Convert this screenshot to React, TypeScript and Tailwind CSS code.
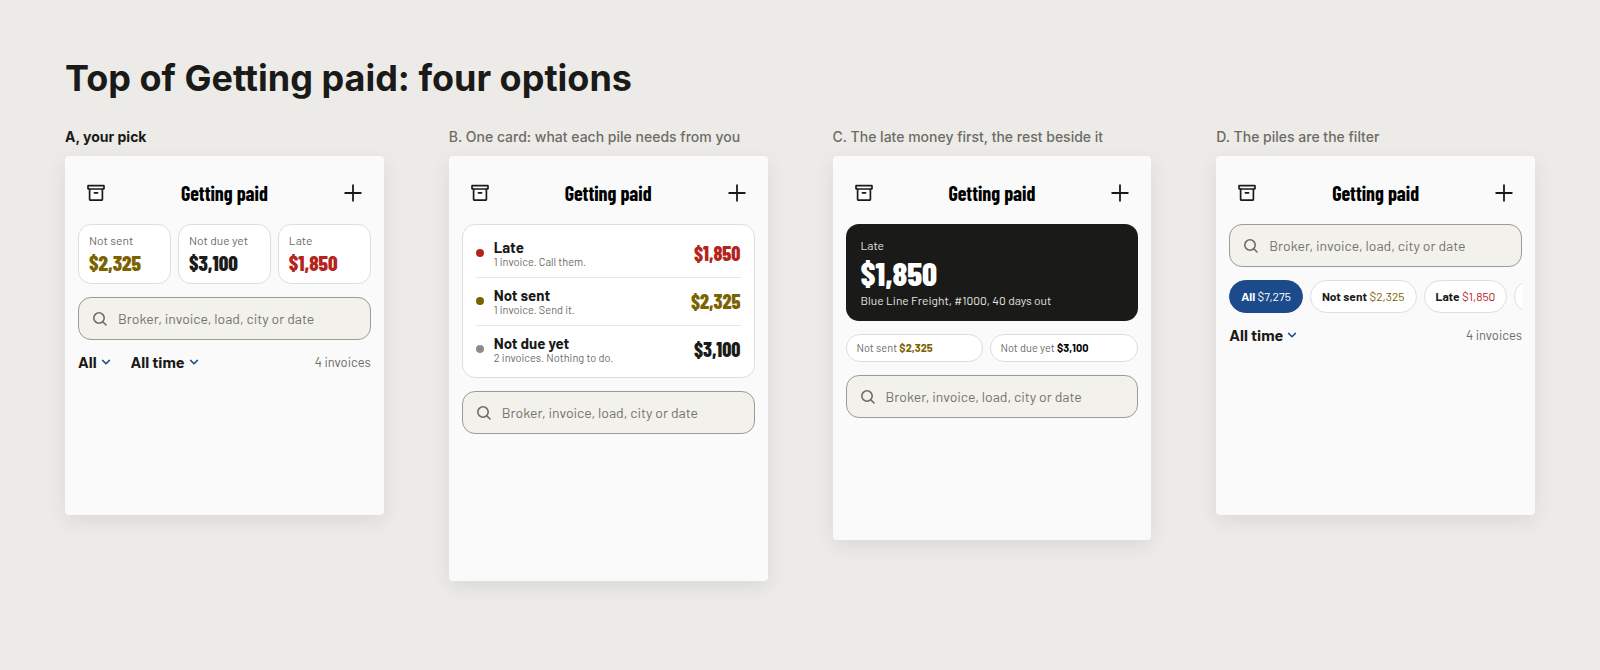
import React, { useId } from "react";

const money = "font-['Barlow_Condensed','Liberation_Sans_Narrow',sans-serif] font-extrabold";

function ArchiveIcon() {
  return (
    <svg width="20" height="20" viewBox="0 0 20 20" fill="none" stroke="currentColor" strokeWidth="1.7" strokeLinejoin="round" strokeLinecap="round" aria-hidden="true">
      <rect x="2" y="2.6" width="16" height="3.4" rx="0.5" />
      <path d="M3.6 6V16.2a1 1 0 0 0 1 1h10.8a1 1 0 0 0 1-1V6M8.4 9.8h3.2" />
    </svg>
  );
}

function PlusIcon() {
  return (
    <svg width="20" height="20" viewBox="0 0 20 20" fill="none" stroke="currentColor" strokeWidth="1.8" strokeLinecap="round" aria-hidden="true">
      <path d="M10 2.2v15.6M2.2 10h15.6" />
    </svg>
  );
}

function SearchIcon() {
  return (
    <svg width="16" height="16" viewBox="0 0 16 16" fill="none" stroke="currentColor" strokeWidth="1.6" strokeLinecap="round" aria-hidden="true">
      <circle cx="7" cy="7" r="5.2" />
      <path d="M10.8 10.8l3.2 3.2" />
    </svg>
  );
}

function ChevronIcon() {
  return (
    <svg className="pointer-events-none -ml-4 shrink-0 text-[#1c4b8c]" width="10" height="10" viewBox="0 0 10 10" fill="none" stroke="currentColor" strokeWidth="1.5" strokeLinecap="round" strokeLinejoin="round" aria-hidden="true">
      <path d="M1.6 3.4L5 6.7l3.4-3.3" />
    </svg>
  );
}

function Option({ label, active, height, children }: { label: string; active?: boolean; height: string; children: React.ReactNode }) {
  return (
    <section className="min-w-0">
      <h2 className={`mb-[9px] truncate text-sm leading-5 ${active ? "font-bold text-[#1a1a18]" : "font-medium text-[#6c6c66]"}`}>{label}</h2>
      <div className={`flex flex-col rounded bg-[#fafafa] px-[13px] pt-[17px] font-[Barlow,Roboto,sans-serif] text-[#1a1a18] shadow-[0_6px_20px_rgba(0,0,0,0.08)] ${height}`}>
        <header className="mb-[11px] flex h-10 items-center justify-between">
          <button type="button" aria-label="Archive" className="flex size-9 items-center justify-center">
            <ArchiveIcon />
          </button>
          <h3 className="font-['Barlow_Condensed','Liberation_Sans_Narrow',sans-serif] text-xl leading-6 font-bold text-black">Getting paid</h3>
          <button type="button" aria-label="Add invoice" className="flex size-9 items-center justify-center">
            <PlusIcon />
          </button>
        </header>
        <div className="flex flex-col gap-[13px]">{children}</div>
      </div>
    </section>
  );
}

function Search() {
  const id = useId();
  return (
    <div className="flex h-[43px] items-center gap-[10px] rounded-[13px] border border-[#9b9b92] bg-[#f2f1eb] px-[13px] text-[#6c6c66]">
      <label htmlFor={id} aria-label="Search invoices">
        <SearchIcon />
      </label>
      <input id={id} type="search" placeholder="Broker, invoice, load, city or date" className="min-w-0 flex-1 bg-transparent text-sm outline-none placeholder:text-[#74746e]" />
    </div>
  );
}

function Picker({ label, value }: { label: string; value: string }) {
  return (
    <label className="flex items-center">
      <select aria-label={label} className="field-sizing-content appearance-none bg-transparent pr-5 text-base leading-[18px] font-bold outline-none">
        <option>{value}</option>
      </select>
      <ChevronIcon />
    </label>
  );
}

function Filters({ all }: { all?: boolean }) {
  return (
    <div className="flex items-center gap-5">
      {all && <Picker label="Status" value="All" />}
      <Picker label="Period" value="All time" />
      <span className="ml-auto text-[13px] leading-[18px] text-[#6c6c66]">4 invoices</span>
    </div>
  );
}

function Stat({ label, value, color }: { label: string; value: string; color: string }) {
  return (
    <div className="rounded-[13px] border border-[#dededa] bg-white px-[10px] pt-[7px] pb-[6px]">
      <dt className="text-xs leading-[17px] text-[#6c6c66]">{label}</dt>
      <dd className={`${money} text-[21px] leading-7 ${color}`}>{value}</dd>
    </div>
  );
}

function Pile({ dot, label, note, value, color }: { dot: string; label: string; note: string; value: string; color: string }) {
  return (
    <li className="flex h-12 items-center gap-[10px] pb-0.5">
      <span className={`size-2 rounded-full ${dot}`} />
      <div className="flex-1 pt-0.5">
        <p className="text-[15px] leading-4 font-bold">{label}</p>
        <p className="text-[11px] leading-[14px] text-[#6c6c66]">{note}</p>
      </div>
      <span className={`${money} text-[20px] leading-6 ${color}`}>{value}</span>
    </li>
  );
}

export default function App() {
  return (
    <main className="min-h-screen bg-[#ecebe7] px-[65px] pt-[54px] pb-10 font-[Inter,sans-serif]">
      <h1 className="mb-[25px] text-4xl leading-[48px] font-bold text-[#1a1a18]">Top of Getting paid: four options</h1>
      <div className="grid grid-cols-4 items-start gap-[65px]">
        <Option label="A, your pick" active height="min-h-[359px]">
          <dl className="grid grid-cols-3 gap-[7px]">
            <Stat label="Not sent" value="$2,325" color="text-[#7a6200]" />
            <Stat label="Not due yet" value="$3,100" color="text-[#1a1a18]" />
            <Stat label="Late" value="$1,850" color="text-[#b3241c]" />
          </dl>
          <Search />
          <Filters all />
        </Option>

        <Option label="B. One card: what each pile needs from you" height="min-h-[425px]">
          <ul className="divide-y divide-[#e6e6e3] rounded-[13px] border border-[#dededa] bg-white px-[13px] pt-[5px] pb-[3px]">
            <Pile dot="bg-[#b3241c]" label="Late" note="1 invoice. Call them." value="$1,850" color="text-[#b3241c]" />
            <Pile dot="bg-[#7a6200]" label="Not sent" note="1 invoice. Send it." value="$2,325" color="text-[#7a6200]" />
            <Pile dot="bg-[#8c8c84]" label="Not due yet" note="2 invoices. Nothing to do." value="$3,100" color="text-[#1a1a18]" />
          </ul>
          <Search />
        </Option>

        <Option label="C. The late money first, the rest beside it" height="min-h-[384px]">
          <div className="rounded-[13px] bg-[#1a1a18] px-[15px] py-3 text-[#e4e4e0]">
            <p className="text-xs leading-[18px]">Late</p>
            <p className={`${money} text-[33px] leading-[38px] text-white`}>$1,850</p>
            <p className="text-xs leading-[17px]">Blue Line Freight, #1000, 40 days out</p>
          </div>
          <div className="flex gap-[7px] text-[11px] leading-[26px] text-[#6c6c66]">
            <div className="flex-auto rounded-full border border-[#dededa] bg-white px-[10px]">
              Not sent <b className="text-[#7a6200]">$2,325</b>
            </div>
            <div className="flex-auto rounded-full border border-[#dededa] bg-white px-[10px]">
              Not due yet <b className="text-black">$3,100</b>
            </div>
          </div>
          <Search />
        </Option>

        <Option label="D. The piles are the filter" height="min-h-[359px]">
          <Search />
          <div className="flex gap-[7px] overflow-x-auto text-xs leading-[31px] whitespace-nowrap [scrollbar-width:none]">
            <button type="button" aria-pressed="true" className="shrink-0 rounded-full border border-[#1c4b8c] bg-[#1c4b8c] px-[11px] text-white">
              <b>All</b> $7,275
            </button>
            <button type="button" className="shrink-0 rounded-full border border-[#dededa] bg-white px-[11px]">
              <b>Not sent</b> <span className="text-[#7a6200]">$2,325</span>
            </button>
            <button type="button" className="shrink-0 rounded-full border border-[#dededa] bg-white px-[11px]">
              <b>Late</b> <span className="text-[#b3241c]">$1,850</span>
            </button>
            <button type="button" className="shrink-0 rounded-full border border-[#dededa] bg-white px-[11px]">
              <b>Not due yet</b> <span>$3,100</span>
            </button>
          </div>
          <Filters />
        </Option>
      </div>
    </main>
  );
}
